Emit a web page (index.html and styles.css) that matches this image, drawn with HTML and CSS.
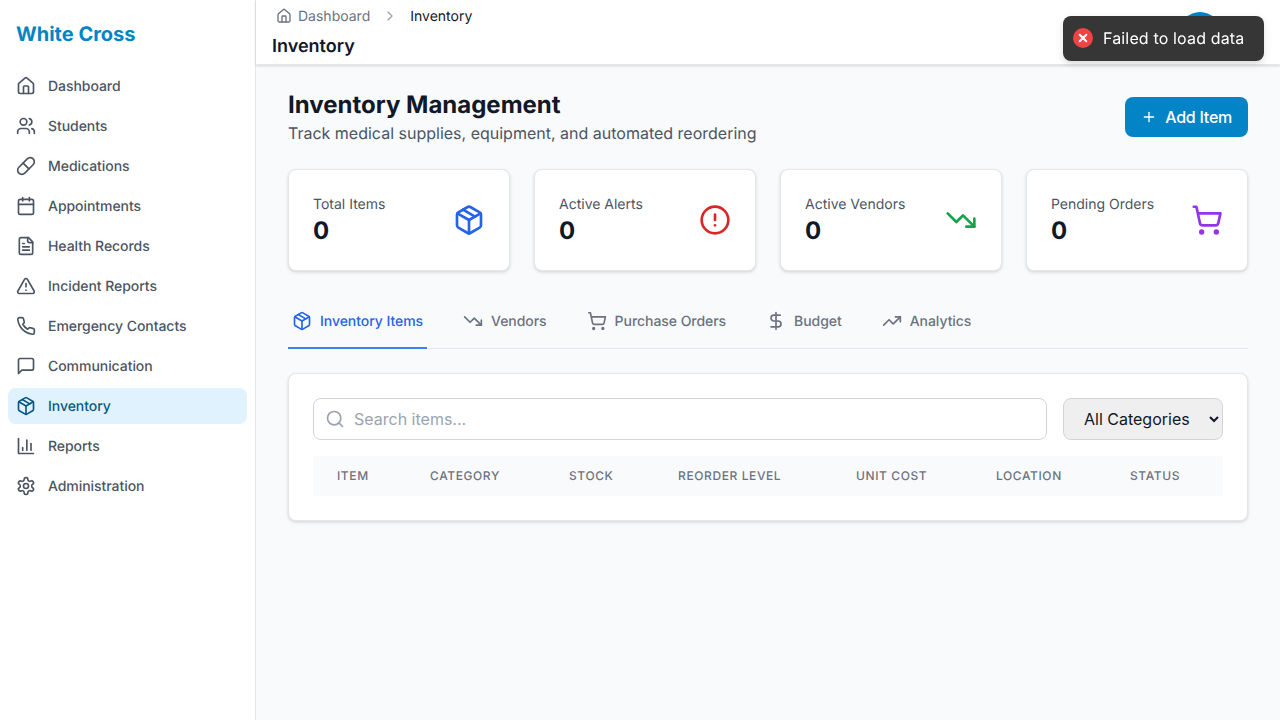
FILE: index.html
```html
<!DOCTYPE html>
<html lang="en">
<head>
  <meta charset="UTF-8" />
  <meta name="viewport" content="width=device-width, initial-scale=1.0"/>
  <title>Inventory - White Cross</title>
  <link rel="stylesheet" href="styles.css">
</head>
<body>
  <svg class="sprite" xmlns="http://www.w3.org/2000/svg">
    <symbol id="i-home" viewBox="0 0 24 24"><path d="M15 21v-8a1 1 0 0 0-1-1h-4a1 1 0 0 0-1 1v8"/><path d="M3 10a2 2 0 0 1 .709-1.528l7-5.999a2 2 0 0 1 2.582 0l7 5.999A2 2 0 0 1 21 10v9a2 2 0 0 1-2 2H5a2 2 0 0 1-2-2z"/></symbol>
    <symbol id="i-users" viewBox="0 0 24 24"><path d="M16 21v-2a4 4 0 0 0-4-4H6a4 4 0 0 0-4 4v2"/><circle cx="9" cy="7" r="4"/><path d="M22 21v-2a4 4 0 0 0-3-3.87"/><path d="M16 3.13a4 4 0 0 1 0 7.75"/></symbol>
    <symbol id="i-pill" viewBox="0 0 24 24"><path d="m10.5 20.5 10-10a4.95 4.95 0 1 0-7-7l-10 10a4.95 4.95 0 1 0 7 7Z"/><path d="m8.5 8.5 7 7"/></symbol>
    <symbol id="i-calendar" viewBox="0 0 24 24"><path d="M8 2v4"/><path d="M16 2v4"/><rect width="18" height="18" x="3" y="4" rx="2"/><path d="M3 10h18"/></symbol>
    <symbol id="i-file" viewBox="0 0 24 24"><path d="M15 2H6a2 2 0 0 0-2 2v16a2 2 0 0 0 2 2h12a2 2 0 0 0 2-2V7Z"/><path d="M14 2v4a2 2 0 0 0 2 2h4"/><path d="M10 9H8"/><path d="M16 13H8"/><path d="M16 17H8"/></symbol>
    <symbol id="i-warning" viewBox="0 0 24 24"><path d="m21.73 18-8-14a2 2 0 0 0-3.48 0l-8 14A2 2 0 0 0 4 21h16a2 2 0 0 0 1.73-3"/><path d="M12 9v4"/><path d="M12 17h.01"/></symbol>
    <symbol id="i-phone" viewBox="0 0 24 24"><path d="M22 16.92v3a2 2 0 0 1-2.18 2 19.79 19.79 0 0 1-8.63-3.07 19.5 19.5 0 0 1-6-6 19.79 19.79 0 0 1-3.07-8.67A2 2 0 0 1 4.11 2h3a2 2 0 0 1 2 1.72 12.84 12.84 0 0 0 .7 2.81 2 2 0 0 1-.45 2.11L8.09 9.91a16 16 0 0 0 6 6l1.27-1.27a2 2 0 0 1 2.11-.45 12.84 12.84 0 0 0 2.81.7A2 2 0 0 1 22 16.92z"/></symbol>
    <symbol id="i-message" viewBox="0 0 24 24"><path d="M21 15a2 2 0 0 1-2 2H7l-4 4V5a2 2 0 0 1 2-2h14a2 2 0 0 1 2 2z"/></symbol>
    <symbol id="i-package" viewBox="0 0 24 24"><path d="M11 21.73a2 2 0 0 0 2 0l7-4A2 2 0 0 0 21 16V8a2 2 0 0 0-1-1.73l-7-4a2 2 0 0 0-2 0l-7 4A2 2 0 0 0 3 8v8a2 2 0 0 0 1 1.73z"/><path d="M12 22V12"/><path d="m3.3 7 8.7 5 8.7-5"/><path d="m7.5 4.27 9 5.15"/></symbol>
    <symbol id="i-chart" viewBox="0 0 24 24"><path d="M3 3v18h18"/><path d="M18 17V9"/><path d="M13 17V5"/><path d="M8 17v-3"/></symbol>
    <symbol id="i-settings" viewBox="0 0 24 24"><path d="M12.22 2h-.44a2 2 0 0 0-2 2v.18a2 2 0 0 1-1 1.73l-.43.25a2 2 0 0 1-2 0l-.15-.08a2 2 0 0 0-2.73.73l-.22.38a2 2 0 0 0 .73 2.73l.15.1a2 2 0 0 1 1 1.72v.51a2 2 0 0 1-1 1.74l-.15.09a2 2 0 0 0-.73 2.73l.22.38a2 2 0 0 0 2.73.73l.15-.08a2 2 0 0 1 2 0l.43.25a2 2 0 0 1 1 1.73V20a2 2 0 0 0 2 2h.44a2 2 0 0 0 2-2v-.18a2 2 0 0 1 1-1.73l.43-.25a2 2 0 0 1 2 0l.15.08a2 2 0 0 0 2.73-.73l.22-.39a2 2 0 0 0-.73-2.73l-.15-.08a2 2 0 0 1-1-1.74v-.5a2 2 0 0 1 1-1.74l.15-.09a2 2 0 0 0 .73-2.73l-.22-.38a2 2 0 0 0-2.73-.73l-.15.08a2 2 0 0 1-2 0l-.43-.25a2 2 0 0 1-1-1.73V4a2 2 0 0 0-2-2z"/><circle cx="12" cy="12" r="3"/></symbol>
    <symbol id="i-alert" viewBox="0 0 24 24"><circle cx="12" cy="12" r="10"/><path d="M12 8v4"/><path d="M12 16h.01"/></symbol>
    <symbol id="i-down" viewBox="0 0 24 24"><path d="m22 17-8.5-8.5-5 5L2 7"/><path d="M16 17h6v-6"/></symbol>
    <symbol id="i-up" viewBox="0 0 24 24"><path d="m22 7-8.5 8.5-5-5L2 17"/><path d="M16 7h6v6"/></symbol>
    <symbol id="i-cart" viewBox="0 0 24 24"><circle cx="8" cy="21" r="1"/><circle cx="19" cy="21" r="1"/><path d="M2.05 2.05h2l2.66 12.42a2 2 0 0 0 2 1.58h9.78a2 2 0 0 0 1.95-1.57l1.65-7.43H5.12"/></symbol>
    <symbol id="i-dollar" viewBox="0 0 24 24"><path d="M12 2v20"/><path d="M17 5H9.5a3.5 3.5 0 0 0 0 7h5a3.5 3.5 0 0 1 0 7H6"/></symbol>
    <symbol id="i-search" viewBox="0 0 24 24"><circle cx="11" cy="11" r="8"/><path d="m21 21-4.3-4.3"/></symbol>
    <symbol id="i-plus" viewBox="0 0 24 24"><path d="M5 12h14"/><path d="M12 5v14"/></symbol>
    <symbol id="i-chevron" viewBox="0 0 24 24"><path d="m9 18 6-6-6-6"/></symbol>
  </svg>

  <div class="app">
    <aside class="sidebar">
      <div class="logo">White Cross</div>
      <nav class="nav">
        <a class="nav-item"><svg class="icon"><use href="#i-home"/></svg>Dashboard</a>
        <a class="nav-item"><svg class="icon"><use href="#i-users"/></svg>Students</a>
        <a class="nav-item"><svg class="icon"><use href="#i-pill"/></svg>Medications</a>
        <a class="nav-item"><svg class="icon"><use href="#i-calendar"/></svg>Appointments</a>
        <a class="nav-item"><svg class="icon"><use href="#i-file"/></svg>Health Records</a>
        <a class="nav-item"><svg class="icon"><use href="#i-warning"/></svg>Incident Reports</a>
        <a class="nav-item"><svg class="icon"><use href="#i-phone"/></svg>Emergency Contacts</a>
        <a class="nav-item"><svg class="icon"><use href="#i-message"/></svg>Communication</a>
        <a class="nav-item active"><svg class="icon"><use href="#i-package"/></svg>Inventory</a>
        <a class="nav-item"><svg class="icon"><use href="#i-chart"/></svg>Reports</a>
        <a class="nav-item"><svg class="icon"><use href="#i-settings"/></svg>Administration</a>
      </nav>
    </aside>

    <div class="content">
      <header class="topbar">
        <div class="crumbs">
          <svg class="icon crumb-home"><use href="#i-home"/></svg>
          <span class="crumb-link">Dashboard</span>
          <svg class="icon crumb-sep"><use href="#i-chevron"/></svg>
          <span class="crumb-current">Inventory</span>
        </div>
        <div class="page-name">Inventory</div>
        <div class="avatar"></div>
      </header>

      <main class="main">
        <div class="page-head">
          <div>
            <h1>Inventory Management</h1>
            <p>Track medical supplies, equipment, and automated reordering</p>
          </div>
          <button class="add-btn" type="button"><svg class="icon"><use href="#i-plus"/></svg>Add Item</button>
        </div>

        <div class="stats">
          <div class="card stat">
            <div><div class="stat-label">Total Items</div><div class="stat-value">0</div></div>
            <svg class="icon stat-icon blue"><use href="#i-package"/></svg>
          </div>
          <div class="card stat">
            <div><div class="stat-label">Active Alerts</div><div class="stat-value">0</div></div>
            <svg class="icon stat-icon red"><use href="#i-alert"/></svg>
          </div>
          <div class="card stat">
            <div><div class="stat-label">Active Vendors</div><div class="stat-value">0</div></div>
            <svg class="icon stat-icon green"><use href="#i-down"/></svg>
          </div>
          <div class="card stat">
            <div><div class="stat-label">Pending Orders</div><div class="stat-value">0</div></div>
            <svg class="icon stat-icon purple"><use href="#i-cart"/></svg>
          </div>
        </div>

        <div class="tabs">
          <a class="tab active"><svg class="icon"><use href="#i-package"/></svg>Inventory Items</a>
          <a class="tab"><svg class="icon"><use href="#i-down"/></svg>Vendors</a>
          <a class="tab"><svg class="icon"><use href="#i-cart"/></svg>Purchase Orders</a>
          <a class="tab"><svg class="icon"><use href="#i-dollar"/></svg>Budget</a>
          <a class="tab"><svg class="icon"><use href="#i-up"/></svg>Analytics</a>
        </div>

        <section class="card panel">
          <div class="filters">
            <div class="search">
              <svg class="icon search-icon"><use href="#i-search"/></svg>
              <input type="text" placeholder="Search items..." />
            </div>
            <select class="category">
              <option>All Categories</option>
            </select>
          </div>
          <table class="items">
            <thead>
              <tr>
                <th>Item</th>
                <th>Category</th>
                <th>Stock</th>
                <th>Reorder Level</th>
                <th>Unit Cost</th>
                <th>Location</th>
                <th>Status</th>
              </tr>
            </thead>
            <tbody></tbody>
          </table>
        </section>
      </main>
    </div>
  </div>

  <div class="toast">
    <svg class="toast-icon" viewBox="0 0 20 20"><circle class="toast-disc" cx="10" cy="10" r="10"/><path class="toast-x" d="M6.7 6.7l6.6 6.6M13.3 6.7l-6.6 6.6"/></svg>
    <span>Failed to load data</span>
  </div>
</body>
</html>
```

FILE: styles.css
```css
* {
  box-sizing: border-box;
}

body {
  margin: 0;
  font-family: Inter, "Liberation Sans", sans-serif;
  color: #111827;
  background: #f9fafb;
  text-rendering: geometricPrecision;
}

.sprite {
  display: none;
}

.icon {
  width: 20px;
  height: 20px;
  flex: none;
  fill: none;
  stroke: currentColor;
  stroke-width: 2;
  stroke-linecap: round;
  stroke-linejoin: round;
}

.app {
  display: flex;
  height: 720px;
  overflow: hidden;
}

/* sidebar */
.sidebar {
  width: 256px;
  flex: none;
  background: #fff;
  border-right: 1px solid #e5e7eb;
}

.logo {
  height: 68px;
  padding-left: 16px;
  font-size: 20px;
  font-weight: 700;
  line-height: 68px;
  color: #0284c7;
}

.nav {
  display: flex;
  flex-direction: column;
  gap: 4px;
  padding: 0 8px;
}

.nav-item {
  display: flex;
  align-items: center;
  gap: 12px;
  height: 36px;
  padding: 0 8px;
  border-radius: 8px;
  font-size: 14px;
  font-weight: 500;
  letter-spacing: -0.05px;
  color: #4b5563;
}

.nav-item.active {
  background: #e0f2fe;
  color: #075985;
}

/* header */
.content {
  flex: 1;
  min-width: 0;
}

.topbar {
  position: relative;
  height: 65px;
  padding: 8px 16px 0;
  background: #fff;
  border-bottom: 1px solid #e5e7eb;
  box-shadow: 0 1px 3px rgba(0, 0, 0, 0.1), 0 1px 2px rgba(0, 0, 0, 0.06);
}

.crumbs {
  display: flex;
  align-items: center;
  height: 16px;
  padding-left: 4px;
  font-size: 14px;
  color: #6b7280;
}

.crumb-home {
  width: 16px;
  height: 16px;
  margin-right: 6px;
}

.crumb-sep {
  width: 16px;
  height: 16px;
  margin: 0 12px;
  color: #9ca3af;
}

.crumb-current {
  color: #111827;
}

.page-name {
  margin-top: 11px;
  font-size: 18px;
  font-weight: 600;
  line-height: 24px;
}

.avatar {
  position: absolute;
  top: 12px;
  left: 924px;
  width: 40px;
  height: 40px;
  border-radius: 50%;
  background: #0284c7;
}

/* main area */
.main {
  padding: 24px 32px 32px;
}

.page-head {
  display: flex;
  justify-content: space-between;
  align-items: center;
}

h1 {
  margin: 0;
  font-size: 24px;
  font-weight: 700;
  line-height: 32px;
}

.page-head p {
  margin: 0;
  font-size: 16px;
  line-height: 24px;
  color: #4b5563;
}

.add-btn {
  display: flex;
  align-items: center;
  gap: 8px;
  height: 40px;
  padding: 0 16px;
  border: 0;
  border-radius: 8px;
  background: #0284c7;
  color: #fff;
  font: 500 16px Inter, sans-serif;
  letter-spacing: -0.25px;
}

.add-btn .icon {
  width: 16px;
  height: 16px;
}

.card {
  background: #fff;
  border: 1px solid #e5e7eb;
  border-radius: 8px;
  box-shadow: 0 1px 3px rgba(0, 0, 0, 0.1), 0 2px 4px rgba(0, 0, 0, 0.06);
}

.stats {
  display: grid;
  grid-template-columns: repeat(4, 1fr);
  gap: 24px;
  margin-top: 24px;
}

.stat {
  display: flex;
  justify-content: space-between;
  align-items: center;
  height: 102px;
  padding: 0 24px;
}

.stat-label {
  margin-top: 2px;
  font-size: 14px;
  line-height: 20px;
  color: #4b5563;
}

.stat-value {
  font-size: 24px;
  font-weight: 700;
  line-height: 32px;
}

.stat-icon {
  width: 32px;
  height: 32px;
}

.blue { color: #2563eb; }
.red { color: #dc2626; }
.green { color: #16a34a; }
.purple { color: #9333ea; }

/* tabs */
.tabs {
  display: flex;
  gap: 32px;
  margin-top: 24px;
  border-bottom: 1px solid #e5e7eb;
}

.tab {
  display: flex;
  align-items: center;
  gap: 8px;
  height: 54px;
  margin-bottom: -1px;
  padding: 0 4px;
  border-bottom: 2px solid transparent;
  font-size: 14px;
  font-weight: 500;
  letter-spacing: -0.05px;
  color: #6b7280;
}

.tab.active {
  border-bottom-color: #3b82f6;
  color: #2563eb;
}

/* items panel */
.panel {
  margin-top: 24px;
  padding: 24px;
}

.filters {
  display: flex;
  gap: 16px;
}

.search {
  position: relative;
  flex: 1;
}

.search input {
  width: 100%;
  height: 42px;
  padding: 0 16px 0 40px;
  border: 1px solid #d1d5db;
  border-radius: 8px;
  font: 16px Inter, sans-serif;
}

.search input::placeholder {
  color: #9ca3af;
}

.search-icon {
  position: absolute;
  top: 11px;
  left: 12px;
  color: #9ca3af;
}

.category {
  width: 160px;
  height: 42px;
  padding: 0 12px 0 16px;
  border: 1px solid #d1d5db;
  border-radius: 8px;
  font: 16px Inter, sans-serif;
  color: #111827;
}

.items {
  width: 100%;
  margin-top: 16px;
  border-collapse: collapse;
  table-layout: fixed;
}

.items th {
  height: 40px;
  padding: 0 0 2px 24px;
  background: #f9fafb;
  font-size: 12px;
  font-weight: 500;
  letter-spacing: 0.05em;
  text-align: left;
  text-transform: uppercase;
  color: #6b7280;
}

.items th:nth-child(1) { width: 93px; }
.items th:nth-child(2) { width: 139px; }
.items th:nth-child(3) { width: 109px; }
.items th:nth-child(4) { width: 178px; }
.items th:nth-child(5) { width: 140px; }
.items th:nth-child(6) { width: 134px; }

/* toast */
.toast {
  position: fixed;
  top: 16px;
  right: 16px;
  display: flex;
  align-items: center;
  gap: 10px;
  width: 201px;
  height: 45px;
  padding: 0 10px 1px;
  border-radius: 8px;
  background: #363636;
  color: #fff;
  font-size: 16px;
  line-height: 24px;
  letter-spacing: 0.15px;
  box-shadow: 0 3px 10px rgba(0, 0, 0, 0.1), 0 3px 3px rgba(0, 0, 0, 0.05);
}

.toast-icon {
  width: 20px;
  height: 20px;
  flex: none;
}

.toast-disc {
  fill: #ef4444;
}

.toast-x {
  fill: none;
  stroke: #fff;
  stroke-width: 2;
  stroke-linecap: round;
}
```
